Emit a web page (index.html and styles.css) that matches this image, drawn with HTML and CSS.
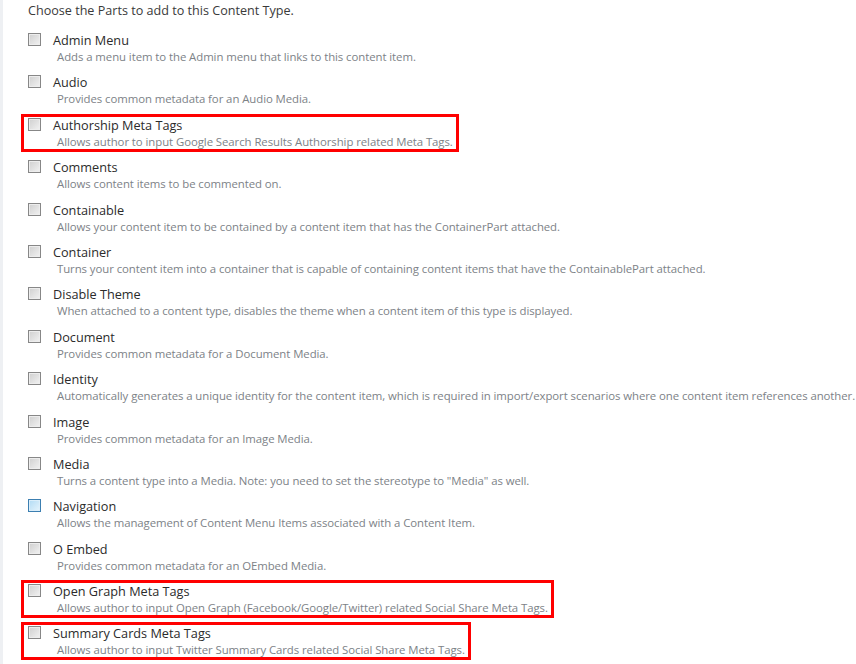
FILE: index.html
```html
<!DOCTYPE html>
<html lang="en">
<head>
  <meta charset="UTF-8" />
  <title>Content Parts</title>
  <link rel="stylesheet" href="styles.css">
</head>
<body>
  <div class="page">
    <p class="intro">Choose the Parts to add to this Content Type.</p>

    <ul class="parts">
      <li class="part">
        <label><input type="checkbox"><span class="title">Admin Menu</span></label>
        <span class="hint">Adds a menu item to the Admin menu that links to this content item.</span>
      </li>
      <li class="part">
        <label><input type="checkbox"><span class="title">Audio</span></label>
        <span class="hint">Provides common metadata for an Audio Media.</span>
      </li>
      <li class="part marked">
        <label><input type="checkbox"><span class="title">Authorship Meta Tags</span></label>
        <span class="hint">Allows author to input Google Search Results Authorship related Meta Tags.</span>
      </li>
      <li class="part">
        <label><input type="checkbox"><span class="title">Comments</span></label>
        <span class="hint">Allows content items to be commented on.</span>
      </li>
      <li class="part">
        <label><input type="checkbox"><span class="title">Containable</span></label>
        <span class="hint">Allows your content item to be contained by a content item that has the ContainerPart attached.</span>
      </li>
      <li class="part">
        <label><input type="checkbox"><span class="title">Container</span></label>
        <span class="hint">Turns your content item into a container that is capable of containing content items that have the ContainablePart attached.</span>
      </li>
      <li class="part">
        <label><input type="checkbox"><span class="title">Disable Theme</span></label>
        <span class="hint">When attached to a content type, disables the theme when a content item of this type is displayed.</span>
      </li>
      <li class="part">
        <label><input type="checkbox"><span class="title">Document</span></label>
        <span class="hint">Provides common metadata for a Document Media.</span>
      </li>
      <li class="part">
        <label><input type="checkbox"><span class="title">Identity</span></label>
        <span class="hint">Automatically generates a unique identity for the content item, which is required in import/export scenarios where one content item references another.</span>
      </li>
      <li class="part">
        <label><input type="checkbox"><span class="title">Image</span></label>
        <span class="hint">Provides common metadata for an Image Media.</span>
      </li>
      <li class="part">
        <label><input type="checkbox"><span class="title">Media</span></label>
        <span class="hint">Turns a content type into a Media. Note: you need to set the stereotype to "Media" as well.</span>
      </li>
      <li class="part">
        <label><input type="checkbox" class="hover"><span class="title">Navigation</span></label>
        <span class="hint">Allows the management of Content Menu Items associated with a Content Item.</span>
      </li>
      <li class="part">
        <label><input type="checkbox"><span class="title">O Embed</span></label>
        <span class="hint">Provides common metadata for an OEmbed Media.</span>
      </li>
      <li class="part marked">
        <label><input type="checkbox"><span class="title">Open Graph Meta Tags</span></label>
        <span class="hint">Allows author to input Open Graph (Facebook/Google/Twitter) related Social Share Meta Tags.</span>
      </li>
      <li class="part marked">
        <label><input type="checkbox"><span class="title">Summary Cards Meta Tags</span></label>
        <span class="hint">Allows author to input Twitter Summary Cards related Social Share Meta Tags.</span>
      </li>
    </ul>
  </div>
</body>
</html>
```

FILE: styles.css
```css
* { box-sizing: border-box; }

body {
  margin: 0;
  background: #fff;
  font-family: 'Open Sans', 'Noto Sans', sans-serif;
  color: #333;
  overflow: hidden;
}

.page {
  border-left: 3px solid #eef0f3;
  min-height: 100vh;
  padding: 2px 0 0 18px;
  white-space: nowrap;
}

.intro {
  margin: 0 0 9px 7px;
  font-size: 12.6px;
  line-height: 18px;
  color: #3a3a3a;
}

.parts {
  list-style: none;
  margin: 0;
  padding: 0;
}

.part {
  width: fit-content;
  border: 3px solid transparent;
  padding: 1px 3px 0 4px;
  margin-bottom: 4.4px;
}

.part label {
  display: flex;
  align-items: flex-start;
  height: 16px;
}

.part input {
  appearance: none;
  -webkit-appearance: none;
  flex: none;
  width: 13px;
  height: 13px;
  margin: 0 12px 0 0;
  border: 1px solid #878787;
  background: linear-gradient(135deg, #cfcfcf, #f2f2f2);
  box-shadow: inset 0 0 0 1px #ededed;
}

.part input.hover {
  border-color: #3c7fb1;
  background: linear-gradient(135deg, #b1dbf4, #e6f4fc);
  box-shadow: inset 0 0 0 1px #dbeefa;
}

.title {
  font-size: 12.7px;
  line-height: 14px;
  color: #2b2b2b;
}

.hint {
  display: block;
  padding-left: 29px;
  font-size: 11.4px;
  line-height: 15px;
  letter-spacing: -0.07px;
  color: #7d8287;
}

.part.marked {
  border-color: #f00;
}
```
